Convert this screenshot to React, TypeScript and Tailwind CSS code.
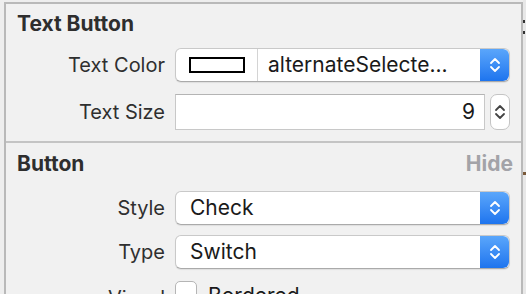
import React from "react";

const Chevrons = ({ color }: { color: string }) => (
  <svg width="12" height="18" viewBox="0 0 12 18" fill="none">
    <path d="M2 7 L6 3 L10 7" stroke={color} strokeWidth="1.8" strokeLinecap="round" strokeLinejoin="round" />
    <path d="M2 11 L6 15 L10 11" stroke={color} strokeWidth="1.8" strokeLinecap="round" strokeLinejoin="round" />
  </svg>
);

const BlueStepper = () => (
  <div className="flex w-[29px] items-center justify-center self-stretch rounded-r-[6px] bg-gradient-to-b from-[#5aa6fb] to-[#1d74ee]">
    <Chevrons color="#ffffff" />
  </div>
);

const PopUp = ({ children }: { children: React.ReactNode }) => (
  <div className="flex h-[34px] items-stretch rounded-[6px] border border-[#c9c9c9] border-b-[#aaaaaa] bg-white shadow-[0_1px_1px_rgba(0,0,0,0.08)]">
    {children}
    <BlueStepper />
  </div>
);

const Label = ({ children }: { children: React.ReactNode }) => (
  <div className="w-[169px] shrink-0 pr-[10px] text-right text-[20px] leading-[24px] text-[#2f2f2f]">{children}</div>
);

export default function App() {
  return (
    <div className="flex h-[294px] w-[526px] overflow-hidden bg-[#eeeeee] font-['Inter',sans-serif]">
      <div className="w-[4px] shrink-0" />
      <div className="mt-[2px] flex w-[519px] shrink-0 flex-col border-l-2 border-r-2 border-t-2 border-[#b9b9b9] bg-[#f1f1f1]">
        {/* Text Button section */}
        <div className="flex flex-col border-b-2 border-[#c4c4c4] pb-[11px]">
          <div className="pl-[11px] pt-[7px] text-[21px] font-bold leading-[26px] text-[#2e2e2e]">Text Button</div>
          <div className="mt-[11px] flex items-center">
            <Label>Text Color</Label>
            <div className="w-[335px]">
              <PopUp>
                <div className="flex w-[82px] items-center justify-center border-r border-[#d4d4d4]">
                  <div className="h-[16px] w-[56px] border-2 border-black bg-white" />
                </div>
                <div className="flex-1 truncate pl-[10px] text-[21px] leading-[32px] text-[#1a1a1a]">alternateSelecte...</div>
              </PopUp>
            </div>
          </div>
          <div className="mt-[12px] flex items-center">
            <Label>Text Size</Label>
            <div className="flex w-[335px] items-center gap-[5px]">
              <div className="flex h-[36px] flex-1 items-center justify-end border border-[#c8c8c8] border-t-[#b4b4b4] bg-white pr-[9px] text-[21px] text-[#1a1a1a]">9</div>
              <div className="flex h-[36px] w-[20px] items-center justify-center rounded-[7px] border border-[#c4c4c4] bg-white">
                <Chevrons color="#444444" />
              </div>
            </div>
          </div>
        </div>
        {/* Button section */}
        <div className="flex flex-col">
          <div className="flex items-center justify-between pl-[11px] pr-[8px] pt-[8px] text-[21px] font-bold leading-[26px]">
            <span className="text-[#2e2e2e]">Button</span>
            <span className="text-[#a3a3a8]">Hide</span>
          </div>
          <div className="mt-[14px] flex items-center">
            <Label>Style</Label>
            <div className="w-[335px]">
              <PopUp>
                <div className="flex-1 pl-[14px] text-[21px] leading-[32px] text-[#1a1a1a]">Check</div>
              </PopUp>
            </div>
          </div>
          <div className="mt-[10px] flex items-center">
            <Label>Type</Label>
            <div className="w-[335px]">
              <PopUp>
                <div className="flex-1 pl-[14px] text-[21px] leading-[32px] text-[#1a1a1a]">Switch</div>
              </PopUp>
            </div>
          </div>
          <div className="mt-[12px] flex items-start">
            <Label>
              <span className="relative top-[5px]">Visual</span>
            </Label>
            <div className="flex items-start gap-[11px]">
              <div className="h-[22px] w-[22px] shrink-0 rounded-[5px] border border-[#b5b5b5] bg-white" />
              <span className="relative top-[3px] text-[21px] leading-[24px] text-[#1a1a1a]">Bordered</span>
            </div>
          </div>
        </div>
      </div>
      <div className="flex flex-1 flex-col bg-[#e8e8e8]">
        <div className="h-[20px] shrink-0" />
        <div className="h-[14px] w-[2px] shrink-0 border-y-[3px] border-[#333333]" />
        <div className="h-[138px] shrink-0" />
        <div className="h-[3px] shrink-0 bg-[#7a5a3a]" />
      </div>
    </div>
  );
}
